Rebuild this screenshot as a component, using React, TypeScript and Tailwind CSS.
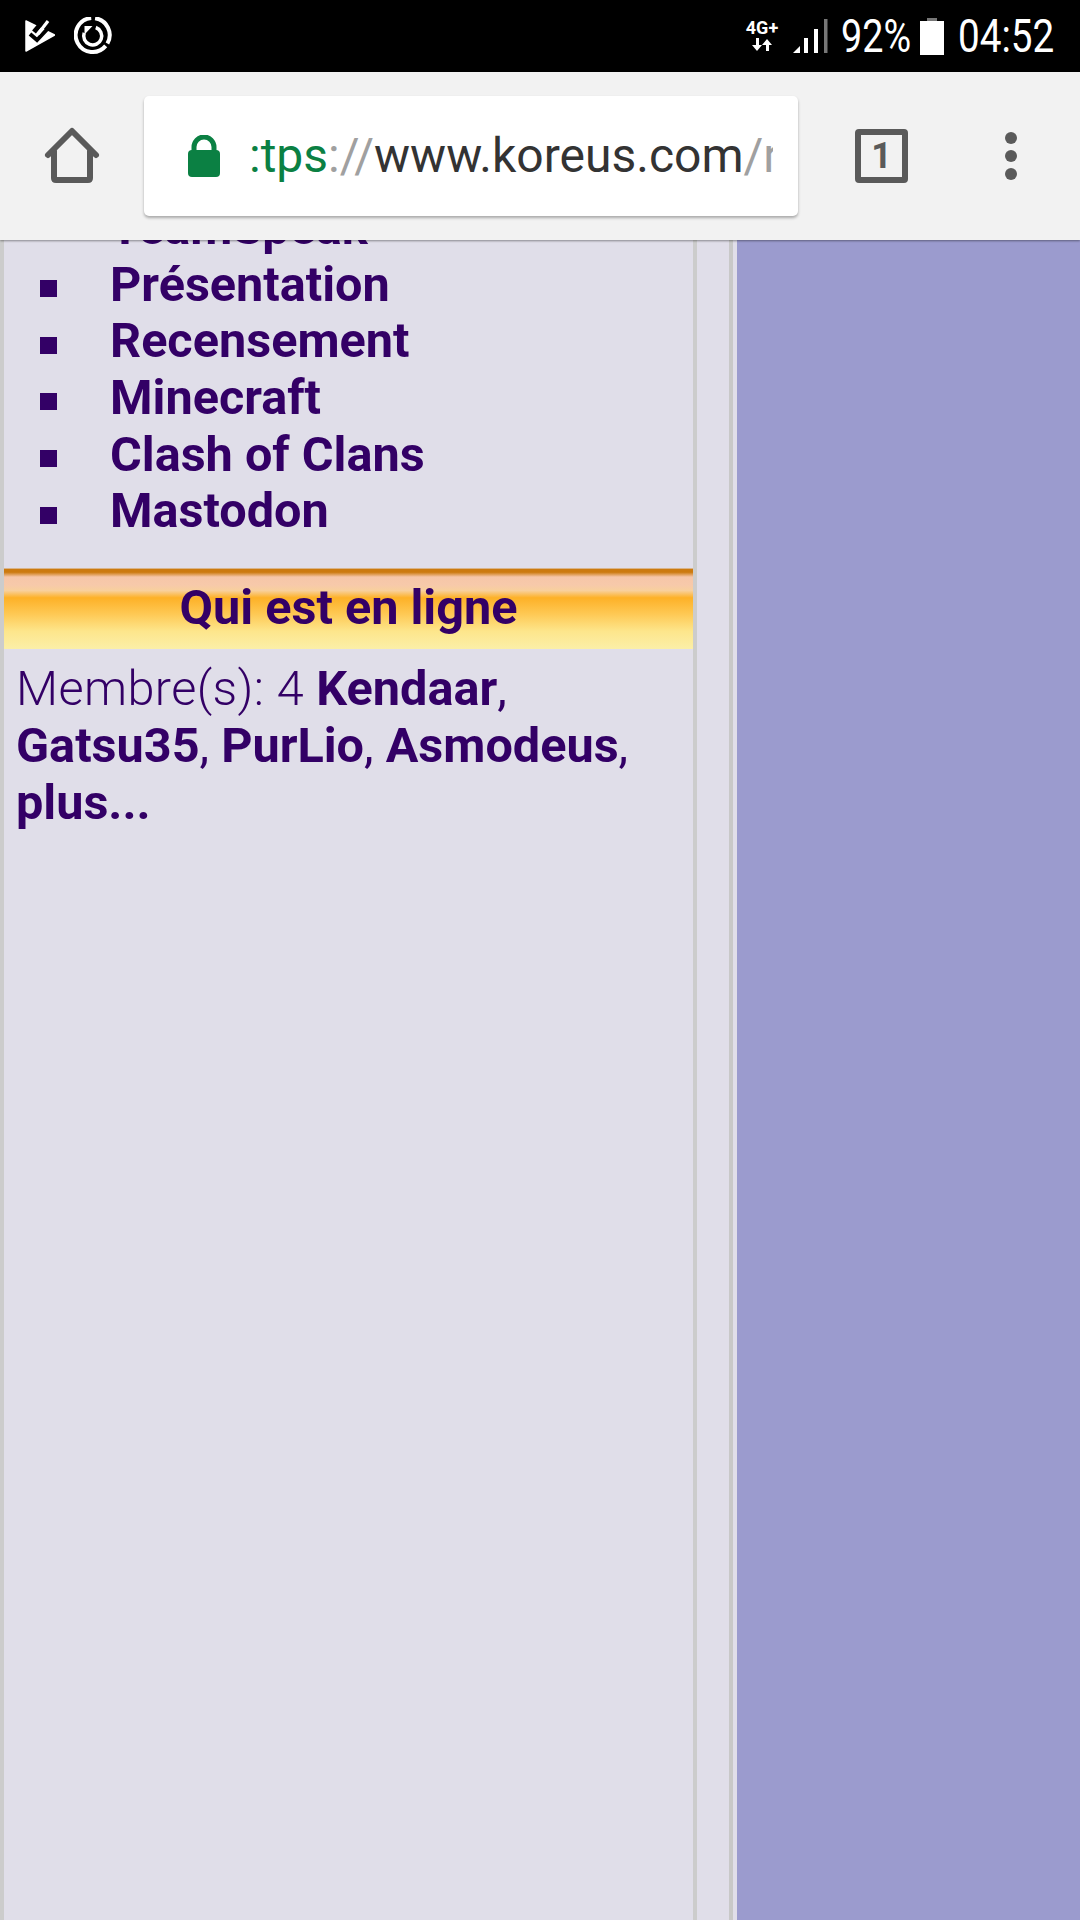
import React from "react";

const items = ["TeamSpeak", "Présentation", "Recensement", "Minecraft", "Clash of Clans", "Mastodon"];

export default function App() {
  return (
    <div className="w-[1080px] h-[1920px] overflow-hidden flex flex-col bg-[#e0dee9] font-['Roboto',sans-serif] text-[#330066]">
      <div className="h-[72px] shrink-0 bg-black flex items-center justify-between relative z-20">
        <div className="flex items-center gap-[19px] pl-[25px]">
          <svg width="30" height="33" viewBox="0 0 30 33">
            <path d="M1 1 L29.5 15 L1 31 Z" fill="#fff" stroke="#fff" strokeWidth="1.5" strokeLinejoin="round" />
            <path d="M5 14 L12 20 L28 3" fill="none" stroke="#000" strokeWidth="4" />
            <path d="M9 12 L20 -1" fill="none" stroke="#000" strokeWidth="5" />
            <path d="M13 14 L23 1" fill="none" stroke="#fff" strokeWidth="3.2" />
          </svg>
          <svg width="38" height="38" viewBox="0 0 38 38" fill="none" stroke="#fff">
            <path d="M21.1 1.2 A17 17 0 0 1 33.4 26.5" strokeWidth="4" />
            <path d="M31.7 28.9 A17 17 0 1 1 17.2 1.06" strokeWidth="4" />
            <path d="M21.8 10.5 A9 9 0 1 1 10.2 15.9" strokeWidth="3.5" />
            <path d="M10.5 9 H18.5 L10.5 17.5 Z" fill="#fff" stroke="none" />
          </svg>
        </div>
        <div className="flex items-center text-white">
          <div className="flex flex-col items-center w-[38px] mr-[11px] -mt-[2px]">
            <span className="text-[18px] font-bold leading-[20px]">4G+</span>
            <svg width="22" height="14" viewBox="0 0 22 14" fill="#fff">
              <path d="M5 0h3v7h3l-5 6-5-6h4zM15 13h3V7h3l-5-6-5 6h4z" />
            </svg>
          </div>
          <svg width="36" height="36" viewBox="0 0 36 36" className="mr-[13px]">
            <path d="M1 35 L8 28 V35 Z" fill="#fff" />
            <rect x="12" y="20" width="4" height="15" fill="#fff" />
            <rect x="22" y="11" width="4" height="24" fill="#fff" />
            <rect x="32" y="1" width="3.5" height="34" fill="#777" />
          </svg>
          <span className="w-[79px] text-[46px] leading-none whitespace-nowrap scale-x-[0.82] origin-left">92%</span>
          <svg width="24" height="37" viewBox="0 0 24 37" className="mr-[14px]">
            <rect x="7" y="0" width="10" height="4" fill="#777" />
            <rect x="0" y="3" width="24" height="34" fill="#fff" />
          </svg>
          <span className="w-[122px] text-[46px] leading-none whitespace-nowrap scale-x-[0.84] origin-left">04:52</span>
        </div>
      </div>

      <div className="h-[168px] shrink-0 bg-[#f2f2f2] relative z-10 flex items-center shadow-[0_1px_2px_rgba(0,0,0,0.4)]">
        <svg width="60" height="60" viewBox="0 0 60 60" className="ml-[42px]" fill="none" stroke="#5a5a5a" strokeWidth="6" strokeLinejoin="round" strokeLinecap="round">
          <path d="M6 29 L30 5 L54 29 M12 25 V52 Q12 54 14 54 H46 Q48 54 48 52 V25" />
        </svg>
        <div className="ml-[42px] w-[654px] h-[120px] bg-white rounded-[5px] shadow-[0_2px_3px_rgba(0,0,0,0.3)] flex items-center pl-[44px] pr-[25px]">
          <svg width="32" height="42" viewBox="0 0 32 42" className="shrink-0 -mt-[1px]">
            <path d="M6 18 V12 A10 10 0 0 1 26 12 V18" fill="none" stroke="#0b8043" strokeWidth="5" />
            <rect x="0" y="15" width="32" height="27" rx="4" fill="#0b8043" />
          </svg>
          <div className="ml-[29px] overflow-hidden whitespace-nowrap text-[48px] leading-[60px] text-[#333]">
            <span className="text-[#0b8043]">:tps</span>
            <span className="text-[#a0a0a0]">://</span>
            <span>www.koreus.com</span>
            <span className="text-[#a0a0a0]">/r</span>
          </div>
        </div>
        <div className="ml-[57px] w-[53px] h-[54px] border-[6px] border-[#5a5a5a] rounded-[4px] flex items-center justify-center text-[36px] font-bold text-[#5a5a5a] leading-none">1</div>
        <div className="ml-[97px] flex flex-col gap-[6px]">
          <span className="w-[12px] h-[12px] rounded-full bg-[#5a5a5a]" />
          <span className="w-[12px] h-[12px] rounded-full bg-[#5a5a5a]" />
          <span className="w-[12px] h-[12px] rounded-full bg-[#5a5a5a]" />
        </div>
      </div>

      <div className="flex-1 flex min-h-0">
        <div className="w-[697px] shrink-0 border-x-4 border-[#cccccc]">
          <ul className="-mt-[40px] pb-[28px] text-[48.6px] font-bold">
            {items.map((t) => (
              <li key={t} className="flex items-center h-[56.7px]">
                <span className="ml-[36px] mr-[53px] mt-[7px] w-[17px] h-[17px] bg-[#330066] shrink-0" />
                {t}
              </li>
            ))}
          </ul>
          <div className="h-[81px] border-t border-[#d9b48a] bg-[linear-gradient(to_bottom,#cc7a0f_0%,#cc7a0f_4%,#f6c6a8_10%,#f7c9aa_20%,#f8d09c_27%,#fdb127_36%,#fec751_55%,#fde68c_78%,#fbefa8_100%)] flex items-center justify-center text-[48.6px] font-bold leading-none pb-[2px]">
            Qui est en ligne
          </div>
          <p className="px-[12px] pt-[11px] text-[48.6px] leading-[57px]">
            <span className="font-light tracking-[0.4px]">Membre(s): 4 </span><b className="font-bold">Kendaar</b>, <b className="font-bold">Gatsu35</b>, <b className="font-bold">PurLio</b>, <b className="font-bold">Asmodeus</b>, <b className="font-bold">plus...</b>
          </p>
        </div>
        <div className="w-[36px] shrink-0 border-r-4 border-[#c8c8c8]" />
        <div className="w-[4px] shrink-0" />
        <div className="flex-1 bg-[#9b9bce]" />
      </div>
    </div>
  );
}
